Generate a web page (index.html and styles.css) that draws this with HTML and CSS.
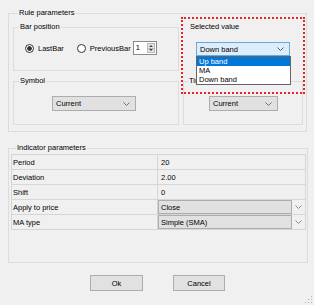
FILE: index.html
```html
<!DOCTYPE html>
<html lang="en">
<head>
    <meta charset="UTF-8">
    <meta name="viewport" content="width=device-width, initial-scale=1.0">
    <title>Rule parameters</title>
    <link rel="stylesheet" href="styles.css">
</head>
<body>

    <div class="dialog">
        <fieldset class="group rule">
            <legend>Rule parameters</legend>
            <div class="rule-grid">
                <fieldset class="group bar-pos">
                    <legend>Bar position</legend>
                    <div class="radio-row">
                        <span class="radio checked"></span>
                        <span class="radio-label">LastBar</span>
                        <span class="radio second"></span>
                        <span class="radio-label">PreviousBar</span>
                        <span class="spin">
                            <span class="spin-value">1</span>
                            <span class="spin-btns">
                                <span class="spin-up"></span>
                                <span class="spin-down"></span>
                            </span>
                        </span>
                    </div>
                </fieldset>

                <fieldset class="group value-group">
                    <legend>Selected value</legend>
                    <div class="combo combo-focus">
                        <span class="combo-text">Down band</span>
                        <svg class="chevron" width="7" height="4" viewBox="0 0 7 4"><polyline points="0.5,0.5 3.5,3.5 6.5,0.5" fill="none" stroke="#606060" stroke-width="1"/></svg>
                        <ul class="dropdown-list">
                            <li class="selected">Up band</li>
                            <li>MA</li>
                            <li>Down band</li>
                        </ul>
                    </div>
                </fieldset>

                <fieldset class="group symbol">
                    <legend>Symbol</legend>
                    <div class="combo combo-symbol">
                        <span class="combo-text">Current</span>
                        <svg class="chevron" width="7" height="4" viewBox="0 0 7 4"><polyline points="0.5,0.5 3.5,3.5 6.5,0.5" fill="none" stroke="#707070" stroke-width="1"/></svg>
                    </div>
                </fieldset>

                <fieldset class="group timeframe">
                    <legend>Timeframe</legend>
                    <div class="combo combo-tf">
                        <span class="combo-text">Current</span>
                        <svg class="chevron" width="7" height="4" viewBox="0 0 7 4"><polyline points="0.5,0.5 3.5,3.5 6.5,0.5" fill="none" stroke="#707070" stroke-width="1"/></svg>
                    </div>
                </fieldset>

                <!-- selection marker drawn over the value box -->
                <div class="highlight"></div>
            </div>
        </fieldset>

        <fieldset class="group indicator">
            <legend>Indicator parameters</legend>
            <div class="param-grid">
                <div class="cell">Period</div>
                <div class="cell value">20</div>
                <div class="cell">Deviation</div>
                <div class="cell value">2.00</div>
                <div class="cell">Shift</div>
                <div class="cell value">0</div>
                <div class="cell">Apply to price</div>
                <div class="cell combo-cell">
                    <span class="cell-text">Close</span>
                    <span class="cell-btn"><svg width="7" height="4" viewBox="0 0 7 4"><polyline points="0.5,0.5 3.5,3.5 6.5,0.5" fill="none" stroke="#8a8a8a" stroke-width="1"/></svg></span>
                </div>
                <div class="cell">MA type</div>
                <div class="cell combo-cell">
                    <span class="cell-text">Simple (SMA)</span>
                    <span class="cell-btn"><svg width="7" height="4" viewBox="0 0 7 4"><polyline points="0.5,0.5 3.5,3.5 6.5,0.5" fill="none" stroke="#8a8a8a" stroke-width="1"/></svg></span>
                </div>
            </div>
        </fieldset>

        <div class="buttons">
            <button class="btn btn-ok">Ok</button>
            <button class="btn btn-cancel">Cancel</button>
        </div>
    </div>

    <svg class="grip" width="12" height="12" viewBox="0 0 12 12">
        <rect x="9" y="3" width="1" height="1" fill="#b4b4b4"/>
        <rect x="6" y="6" width="1" height="1" fill="#b4b4b4"/>
        <rect x="9" y="6" width="1" height="1" fill="#b4b4b4"/>
        <rect x="3" y="9" width="1" height="1" fill="#b4b4b4"/>
        <rect x="6" y="9" width="1" height="1" fill="#b4b4b4"/>
        <rect x="9" y="9" width="1" height="1" fill="#b4b4b4"/>
    </svg>

</body>
</html>
```

FILE: styles.css
```css
* {
    box-sizing: border-box;
}

body {
    margin: 0;
    width: 314px;
    height: 305px;
    position: relative;
    overflow: hidden;
    background-color: #f0f0f0;
    color: #000;
    font-family: "Liberation Sans", Arial, sans-serif;
    font-size: 7.5px;
}

.dialog {
    padding: 7px 7px 0 8px;
}

/* group boxes */
.group {
    margin: 0;
    padding: 0;
    min-width: 0;
    border: 1px solid #dcdcdc;
}

.group > legend {
    height: 12px;
    line-height: 12px;
    padding: 0 1px;
    margin-left: 5px;
}

.rule {
    padding: 2px 3px 6px 4px;
}

.rule-grid {
    position: relative;
    display: grid;
    grid-template-columns: 166px 120px;
    grid-template-rows: 50px 50px;
    column-gap: 4px;
    row-gap: 4px;
}

.value-group {
    border-color: transparent;
}

.timeframe > legend {
    margin-left: 4px;
}

/* radios */
.radio-row {
    display: flex;
    align-items: center;
    height: 14px;
    margin-top: 8px;
    padding-left: 11px;
}

.radio {
    width: 9px;
    height: 9px;
    border: 1px solid #333;
    border-radius: 50%;
    background-color: #fff;
}

.radio.checked {
    background: radial-gradient(circle, #333 0, #333 2px, #fff 2.6px);
}

.radio.second {
    margin-left: 13px;
}

.radio-label {
    margin-left: 4px;
}

.spin {
    display: flex;
    width: 24px;
    height: 14px;
    margin-left: 2px;
    border: 1px solid #8a8a8a;
    background-color: #fff;
}

.spin-value {
    flex: 1;
    padding-left: 2px;
    line-height: 12px;
}

.spin-btns {
    display: flex;
    flex-direction: column;
    width: 9px;
    padding: 1px 1px 1px 0;
}

.spin-up,
.spin-down {
    flex: 1;
    display: flex;
    align-items: center;
    justify-content: center;
    background-color: #e6e6e6;
    border: 1px solid #b8b8b8;
}

.spin-down {
    border-top: none;
}

.spin-up::after,
.spin-down::after {
    content: "";
    border-left: 2px solid transparent;
    border-right: 2px solid transparent;
}

.spin-up::after {
    border-bottom: 2px solid #444;
}

.spin-down::after {
    border-top: 2px solid #444;
}

/* combo boxes */
.combo {
    position: relative;
    display: flex;
    align-items: center;
    height: 15px;
    padding-left: 3px;
    border: 1px solid #adadad;
    background-color: #e1e1e1;
}

.combo-text {
    flex: 1;
}

.chevron {
    margin-right: 5px;
}

.combo-focus {
    width: 94px;
    height: 14px;
    margin: 9px 0 0 12px;
    border-color: #6aa8e4;
    background-color: #deedfa;
}

.combo-symbol {
    width: 84px;
    margin: 9px 0 0 38px;
}

.combo-tf {
    width: 69px;
    margin: 9px 0 0 25px;
}

.dropdown-list {
    position: absolute;
    top: 13px;
    left: -1px;
    z-index: 2;
    width: 95px;
    margin: 0;
    padding: 0;
    list-style: none;
    border: 1px solid #646464;
    background-color: #fff;
}

.dropdown-list li {
    height: 9px;
    line-height: 9px;
    padding-left: 2px;
}

.dropdown-list li.selected {
    background-color: #0078d7;
    color: #fff;
}

.highlight {
    position: absolute;
    left: 168px;
    top: -4px;
    z-index: 3;
    width: 124px;
    height: 77px;
    border: 2px dotted #e3242b;
    pointer-events: none;
}

/* indicator grid */
.indicator {
    margin: 10px -1px 0 0;
    padding: 0 1px 32px 2px;
}

.param-grid {
    display: grid;
    grid-template-columns: 146px 148px;
    border-top: 1px solid #d6d6d6;
    border-left: 1px solid #d6d6d6;
}

.cell {
    display: flex;
    align-items: center;
    height: 15px;
    padding-left: 1px;
    border-right: 1px solid #d6d6d6;
    border-bottom: 1px solid #d6d6d6;
}

.cell.value {
    padding-left: 3px;
}

.combo-cell {
    padding: 0;
}

.cell-text {
    flex: 1;
    align-self: stretch;
    display: flex;
    align-items: center;
    padding-left: 2px;
    border: 1px solid #adadad;
    background-color: #e1e1e1;
}

.cell-btn {
    display: flex;
    align-items: center;
    justify-content: center;
    align-self: stretch;
    width: 13px;
    background-color: #f0f0f0;
}

/* buttons */
.buttons {
    display: flex;
    justify-content: center;
    gap: 30px;
    margin-top: 12px;
}

.btn {
    height: 16px;
    padding: 0;
    border: 1px solid #adadad;
    background-color: #e1e1e1;
    font-family: inherit;
    font-size: 7.5px;
    color: #000;
}

.btn-ok {
    width: 53px;
}

.btn-cancel {
    width: 52px;
}

.grip {
    position: absolute;
    right: 0;
    bottom: 0;
}
```
